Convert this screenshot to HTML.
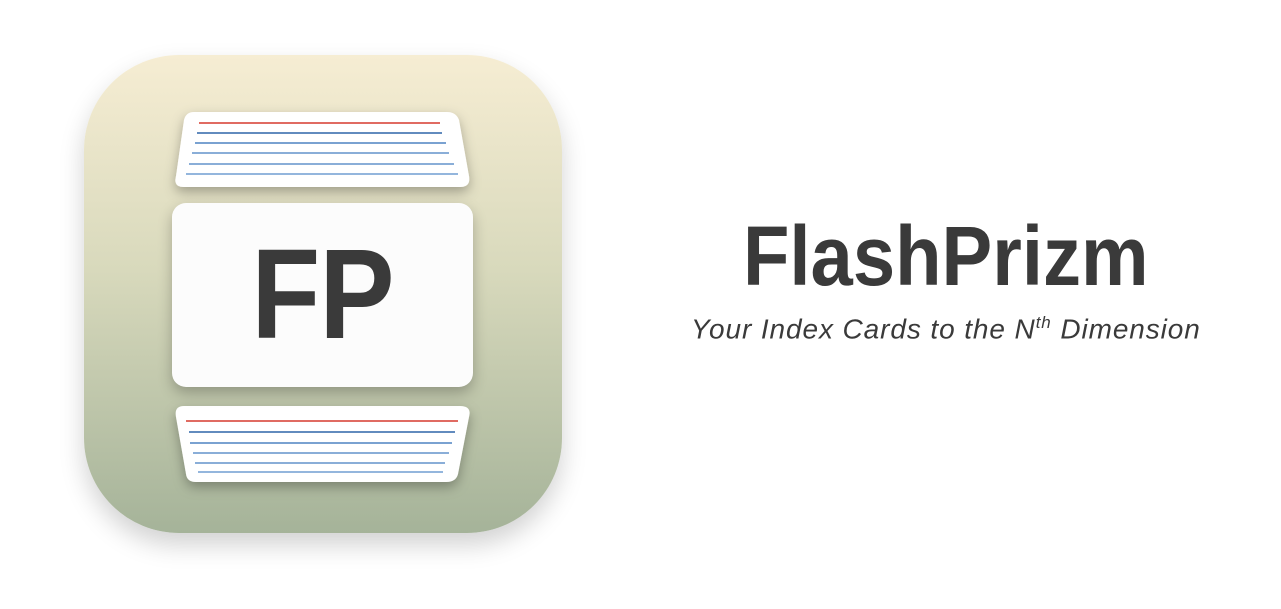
<!DOCTYPE html><html><head><style>
body{margin:0;width:1281px;height:609px;background:#fff;position:relative;overflow:hidden;font-family:"Liberation Sans",sans-serif}
.icon{position:absolute;left:84px;top:55px;width:478px;height:478px;border-radius:95px;background:linear-gradient(#f6edd3,#d8d9bc 45%,#a5b399);box-shadow:0 12px 25px rgba(0,0,0,.18)}
.mid{position:absolute;left:172px;top:203px;width:301px;height:184px;border-radius:14px;background:#fcfcfc;box-shadow:0 6px 14px rgba(0,0,0,.25)}
.mid span{position:absolute;left:0;right:0;top:0;text-align:center;font-weight:bold;font-size:128px;color:#3a3a3a;line-height:184px;transform:scaleX(.88);letter-spacing:-1px}
.t{position:absolute;color:#3a3a3a;white-space:nowrap;transform-origin:left top}
</style></head><body>
<div class="icon"></div>
<svg style="position:absolute;left:0;top:0" width="1281" height="609">
<defs><filter id="s" x="-20%" y="-30%" width="140%" height="180%"><feDropShadow dx="0" dy="5" stdDeviation="6" flood-opacity=".3"/></filter></defs>
<path d="M194 112 H447 Q456 112 459 120 L469 176 Q471 187 460 187 H184 Q173 187 176 176 L184 120 Q186 112 194 112Z" fill="#fff" filter="url(#s)"/>
<g stroke-width="1.6">
<line x1="199" y1="123" x2="440" y2="123" stroke="#d63a2e"/>
<line x1="197" y1="133" x2="442" y2="133" stroke="#2f65a8"/>
<line x1="195" y1="143" x2="446" y2="143" stroke="#4f84c2"/>
<line x1="192" y1="153" x2="449" y2="153" stroke="#6394cc"/>
<line x1="189" y1="164" x2="454" y2="164" stroke="#6394cc"/>
<line x1="186" y1="174" x2="458" y2="174" stroke="#709ed2"/>
</g>
<path d="M184 406 H460 Q472 406 469 417 L458 474 Q456 482 446 482 H196 Q187 482 186 474 L176 417 Q174 406 184 406Z" fill="#fff" filter="url(#s)"/>
<g stroke-width="1.6">
<line x1="186" y1="421" x2="458" y2="421" stroke="#d63a2e"/>
<line x1="189" y1="432" x2="455" y2="432" stroke="#2f65a8"/>
<line x1="190" y1="443" x2="452" y2="443" stroke="#4f84c2"/>
<line x1="193" y1="453" x2="449" y2="453" stroke="#6394cc"/>
<line x1="195" y1="463" x2="445" y2="463" stroke="#6394cc"/>
<line x1="198" y1="472" x2="443" y2="472" stroke="#709ed2"/>
</g>
</svg>
<div class="mid"><span>FP</span></div>
<div class="t" style="left:743px;top:208px;font-size:84px;font-weight:bold;transform:scaleX(.905)">FlashPrizm</div>
<div class="t" style="left:691px;top:313px;font-size:28px;font-style:italic;letter-spacing:.9px">Your Index Cards to the N<sup style="font-size:17px">th</sup> Dimension</div>
</body></html>
